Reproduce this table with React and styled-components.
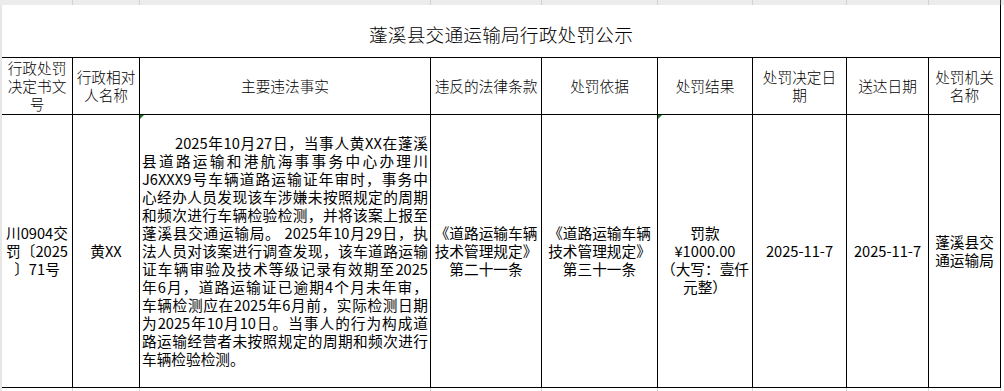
import React from "react";
import styled, { createGlobalStyle, css } from "styled-components";

const COLS = [71, 67, 291, 111, 116, 95, 94, 82, 72];
const gridCols = COLS.map((w) => `${w}px`).join(" ");

const Global = createGlobalStyle`
  html, body { margin: 0; padding: 0; background: #fff; overflow: hidden; }
  body {
    font-family: "Noto Sans CJK SC", "Noto Sans", sans-serif;
    color: #000;
  }
  * { box-sizing: border-box; }
`;

const Page = styled.div`
  width: 1004px;
  height: 391px;
  display: flex;
  flex-direction: column;
  overflow: hidden;
  background: #fff;
`;

const ColumnStrip = styled.div`
  display: grid;
  grid-template-columns: 2px ${gridCols} 1fr;
  height: ${(p) => p.$height}px;
  background: ${(p) => p.$bg};
  flex: none;
`;

const StripCell = styled.div`
  border-right: 1px solid ${(p) => p.$line};
  background: ${(p) => p.$bg || "transparent"};
`;

const Body = styled.div`
  display: flex;
  flex: none;
`;

const Gutter = styled.div`
  width: 2px;
  flex: none;
  background: #e6e6e6;
`;

const Table = styled.div`
  display: grid;
  grid-template-columns: ${gridCols};
  grid-template-rows: 53px 57px 273px;
  width: 999px;
  flex: none;
`;

const TitleCell = styled.div`
  grid-column: 1 / -1;
  border-right: 1px solid #000;
  border-bottom: 1px solid #000;
  display: flex;
  align-items: center;
  justify-content: center;
  padding-top: 4px;
  font-size: 18.67px;
  font-weight: 300;
  letter-spacing: 0.2px;
`;

const cellBase = css`
  border-right: 1px solid #000;
  border-bottom: 1px solid #000;
  display: flex;
  flex-direction: column;
  align-items: center;
  justify-content: center;
  text-align: center;
  font-size: 14.67px;
  line-height: 18px;
`;

const HeaderCell = styled.div`
  ${cellBase}
  font-weight: 300;
`;

const DataCell = styled.div`
  ${cellBase}
  font-weight: 400;
  position: relative;
  padding-top: ${(p) => p.$shift || 0}px;
  ${(p) =>
    p.$marker &&
    css`
      &::before {
        content: "";
        position: absolute;
        left: 0;
        top: 0;
        border-top: 4px solid #1f7a1f;
        border-right: 4px solid transparent;
      }
    `}
`;

const Line = styled.span`
  display: block;
  white-space: nowrap;
`;

const FactBox = styled.div`
  width: 100%;
  padding: 0 2px 0 2px;
  text-align: left;
`;

const FactLine = styled.div`
  white-space: nowrap;
  text-align: justify;
  text-align-last: ${(p) => (p.$last ? "left" : "justify")};
  text-indent: ${(p) => p.$indent || 0}px;
  line-height: 18px;
`;

const headers = [
  ["行政处罚", "决定书文", "号"],
  ["行政相对", "人名称"],
  ["主要违法事实"],
  ["违反的法律条款"],
  ["处罚依据"],
  ["处罚结果"],
  ["处罚决定日", "期"],
  ["送达日期"],
  ["处罚机关", "名称"],
];

const facts = [
  "2025年10月27日，当事人黄XX在蓬溪",
  "县道路运输和港航海事事务中心办理川",
  "J6XXX9号车辆道路运输证年审时，事务中",
  "心经办人员发现该车涉嫌未按照规定的周期",
  "和频次进行车辆检验检测，并将该案上报至",
  "蓬溪县交通运输局。 2025年10月29日，执",
  "法人员对该案进行调查发现，该车道路运输",
  "证车辆审验及技术等级记录有效期至2025",
  "年6月，道路运输证已逾期4个月未年审，",
  "车辆检测应在2025年6月前，实际检测日期",
  "为2025年10月10日。当事人的行为构成道",
  "路运输经营者未按照规定的周期和频次进行",
  "车辆检验检测。",
];

const Lines = ({ lines }) =>
  lines.map((l, i) => <Line key={i}>{l}</Line>);

function Strip({ height, bg, line, lastLine, gutterBg }) {
  return (
    <ColumnStrip $height={height} $bg={bg}>
      <StripCell $line="transparent" $bg={gutterBg} />
      {COLS.map((w, i) => (
        <StripCell
          key={i}
          $line={i === COLS.length - 1 ? lastLine : line}
        />
      ))}
      <div />
    </ColumnStrip>
  );
}

export default function App() {
  return (
    <Page>
      <Global />
      <Strip height={5} bg="#ececec" line="#d2d2d2" lastLine="#333" gutterBg="#ececec" />
      <Body>
        <Gutter />
        <Table>
          <TitleCell>蓬溪县交通运输局行政处罚公示</TitleCell>
          {headers.map((h, i) => (
            <HeaderCell key={i}>
              <Lines lines={h} />
            </HeaderCell>
          ))}
          <DataCell>
            <Lines lines={["川0904交", "罚〔2025", "〕71号"]} />
          </DataCell>
          <DataCell>
            <Lines lines={["黄XX"]} />
          </DataCell>
          <DataCell $marker>
            <FactBox>
              {facts.map((f, i) => (
                <FactLine
                  key={i}
                  $indent={i === 0 ? 33 : 0}
                  $last={i === facts.length - 1}
                >
                  {f}
                </FactLine>
              ))}
            </FactBox>
          </DataCell>
          <DataCell>
            <Lines lines={["《道路运输车辆", "技术管理规定》", "第二十一条"]} />
          </DataCell>
          <DataCell>
            <Lines lines={["《道路运输车辆", "技术管理规定》", "第三十一条"]} />
          </DataCell>
          <DataCell $marker $shift={18}>
            <Lines lines={["罚款", "¥1000.00", "（大写：壹仟", "元整）"]} />
          </DataCell>
          <DataCell>
            <Lines lines={["2025-11-7"]} />
          </DataCell>
          <DataCell>
            <Lines lines={["2025-11-7"]} />
          </DataCell>
          <DataCell>
            <Lines lines={["蓬溪县交", "通运输局"]} />
          </DataCell>
        </Table>
      </Body>
      <Strip height={3} bg="#fff" line="#dcdcdc" lastLine="#dcdcdc" gutterBg="#e6e6e6" />
    </Page>
  );
}
